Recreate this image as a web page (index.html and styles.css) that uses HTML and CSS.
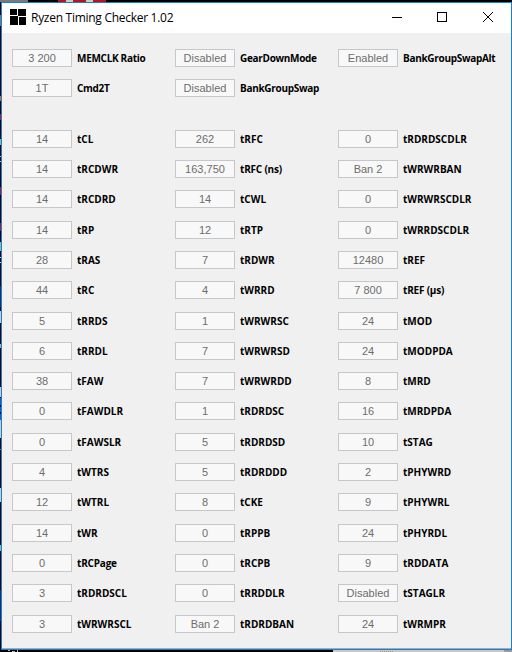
FILE: index.html
```html
<!DOCTYPE html>
<html lang="en">
<head>
<meta charset="utf-8">
<title>Ryzen Timing Checker 1.02</title>
<link rel="stylesheet" href="styles.css">
</head>
<body>
<svg class="desktop" width="512" height="652" viewBox="0 0 512 652" shape-rendering="crispEdges" aria-hidden="true">
<path fill="#000" d="M0 0h512v652H0z"/>
<path fill="#777b80" d="M0 0h28v2H0zM0 15h1v11H0z"/>
<path fill="#b51620" d="M58 0h48v2H58zM0 114h1v6H0zM0 187h1v8H0zM0 223h1v8H0z"/>
<path fill="#ccc" d="M66 0h7v2h-7zM86 0h7v2h-7zM0 156h1v1H0zM0 161h1v1H0zM0 257h1v1H0zM0 262h1v1H0zM0 311h1v12H0zM0 387h1v10H0zM0 420h1v18H0zM0 488h1v14H0z"/>
<path fill="#d06820" d="M0 96h1v5H0zM0 449h1v1H0z"/>
<path fill="#80c0b0" d="M0 139h1v6H0zM0 242h1v9H0zM0 344h1v4H0zM0 545h1v6H0z"/>
<path fill="#1260d0" d="M0 398h1v7H0zM0 407h1v5H0zM0 414h1v6H0z"/>
<path fill="#203060" d="M0 286h1v21H0zM0 590h1v31H0z"/>
<path fill="#c8c8c8" d="M333 650h171v2H333z"/>
<path fill="#999" d="M504 650h8v2h-8z"/>
<path fill="#bbb" d="M8 650h2v1H8zM12 651h3v1h-3zM17 650h1v2h-1z"/>
<path stroke="#b0905c" stroke-dasharray="1 1" d="M380 651.5h13"/>
</svg>
<main class="window">
<header class="titlebar">
<svg class="logo" width="16" height="16" viewBox="0 0 16 16" shape-rendering="crispEdges"><path d="M0 0h16v16H0z"/><path fill="#fff" d="M7 0h1v7H7zM0 6h8v1H0zM8 7h8v1H8zM8 8h1v8H8z"/></svg>
<h1 class="title">Ryzen Timing Checker 1.02</h1>
<svg class="controls" width="104" height="12" viewBox="0 0 104 12" fill="none" stroke="#000"><path d="M0 6.500h10M45.500 1.500h9v9h-9z" shape-rendering="crispEdges"/><path d="M91 1l10 10M101 1L91 11"/></svg>
</header>
<section class="grid modes">
<div class="field"><output>3 200</output><label>MEMCLK Ratio</label></div>
<div class="field"><output>Disabled</output><label>GearDownMode</label></div>
<div class="field"><output>Enabled</output><label>BankGroupSwapAlt</label></div>
<div class="field"><output>1T</output><label>Cmd2T</label></div>
<div class="field"><output>Disabled</output><label>BankGroupSwap</label></div>
</section>
<section class="grid timings">
<div class="field"><output>14</output><label>tCL</label></div>
<div class="field"><output>262</output><label>tRFC</label></div>
<div class="field"><output>0</output><label>tRDRDSCDLR</label></div>
<div class="field"><output>14</output><label>tRCDWR</label></div>
<div class="field"><output>163,750</output><label class="tight">tRFC (ns)</label></div>
<div class="field"><output>Ban 2</output><label>tWRWRBAN</label></div>
<div class="field"><output>14</output><label>tRCDRD</label></div>
<div class="field"><output>14</output><label>tCWL</label></div>
<div class="field"><output>0</output><label>tWRWRSCDLR</label></div>
<div class="field"><output>14</output><label>tRP</label></div>
<div class="field"><output>12</output><label>tRTP</label></div>
<div class="field"><output>0</output><label>tWRRDSCDLR</label></div>
<div class="field"><output>28</output><label>tRAS</label></div>
<div class="field"><output>7</output><label>tRDWR</label></div>
<div class="field"><output>12480</output><label>tREF</label></div>
<div class="field"><output>44</output><label>tRC</label></div>
<div class="field"><output>4</output><label>tWRRD</label></div>
<div class="field"><output>7 800</output><label class="tight">tREF (µs)</label></div>
<div class="field"><output>5</output><label>tRRDS</label></div>
<div class="field"><output>1</output><label>tWRWRSC</label></div>
<div class="field"><output>24</output><label>tMOD</label></div>
<div class="field"><output>6</output><label>tRRDL</label></div>
<div class="field"><output>7</output><label>tWRWRSD</label></div>
<div class="field"><output>24</output><label>tMODPDA</label></div>
<div class="field"><output>38</output><label>tFAW</label></div>
<div class="field"><output>7</output><label>tWRWRDD</label></div>
<div class="field"><output>8</output><label>tMRD</label></div>
<div class="field"><output>0</output><label>tFAWDLR</label></div>
<div class="field"><output>1</output><label>tRDRDSC</label></div>
<div class="field"><output>16</output><label>tMRDPDA</label></div>
<div class="field"><output>0</output><label>tFAWSLR</label></div>
<div class="field"><output>5</output><label>tRDRDSD</label></div>
<div class="field"><output>10</output><label>tSTAG</label></div>
<div class="field"><output>4</output><label>tWTRS</label></div>
<div class="field"><output>5</output><label>tRDRDDD</label></div>
<div class="field"><output>2</output><label>tPHYWRD</label></div>
<div class="field"><output>12</output><label>tWTRL</label></div>
<div class="field"><output>8</output><label>tCKE</label></div>
<div class="field"><output>9</output><label>tPHYWRL</label></div>
<div class="field"><output>14</output><label>tWR</label></div>
<div class="field"><output>0</output><label>tRPPB</label></div>
<div class="field"><output>24</output><label>tPHYRDL</label></div>
<div class="field"><output>0</output><label class="tight">tRCPage</label></div>
<div class="field"><output>0</output><label>tRCPB</label></div>
<div class="field"><output>9</output><label>tRDDATA</label></div>
<div class="field"><output>3</output><label>tRDRDSCL</label></div>
<div class="field"><output>0</output><label>tRRDDLR</label></div>
<div class="field"><output>Disabled</output><label>tSTAGLR</label></div>
<div class="field"><output>3</output><label>tWRWRSCL</label></div>
<div class="field"><output>Ban 2</output><label>tRDRDBAN</label></div>
<div class="field"><output>24</output><label>tWRMPR</label></div>
</section>
</main>
</body>
</html>
```
FILE: styles.css
```css
* { box-sizing: border-box; }
body {
  margin: 0;
  width: 512px;
  height: 652px;
  padding: 2px 0 0 1px;
  overflow: hidden;
}
.desktop { position: absolute; top: 0; left: 0; z-index: -1; }
.window {
  height: 648px;
  background: #f0f0f0;
  border: 1px solid #1a7fd0;
  box-shadow: inset 0 -1px #aaa;
}
.titlebar {
  height: 30px;
  padding: 0 15px 0 8px;
  background: #fff;
  display: flex;
  align-items: center;
}
.logo { margin-top: -2px; }
.title {
  margin: -1px auto 0 5px;
  font: 400 12px/20px "Open Sans", "Noto Sans", sans-serif;
  letter-spacing: -0.28px;
  color: #000;
  white-space: nowrap;
}
.controls { margin-top: -2px; }
.grid {
  display: grid;
  grid-template-columns: repeat(3, 163px);
  padding-left: 10px;
}
.modes { padding-top: 16px; grid-auto-rows: 30px; height: 96.65px; }
.timings { grid-auto-rows: 30.3125px; }
.field { display: flex; align-items: flex-start; }
.field output {
  width: 60px;
  height: 18px;
  border: 1px solid #c5c7cb;
  background: #f8f8f8;
  color: #6d6d6d;
  font: 11px/16px "Liberation Sans", Arial, sans-serif;
  text-align: center;
}
.field label {
  margin-left: 5px;
  color: #000;
  font: 700 10px/18px "Open Sans", "Noto Sans", sans-serif;
  white-space: nowrap;
}
.modes label { letter-spacing: -0.3px; }
.field .tight { letter-spacing: -0.2px; }
```
